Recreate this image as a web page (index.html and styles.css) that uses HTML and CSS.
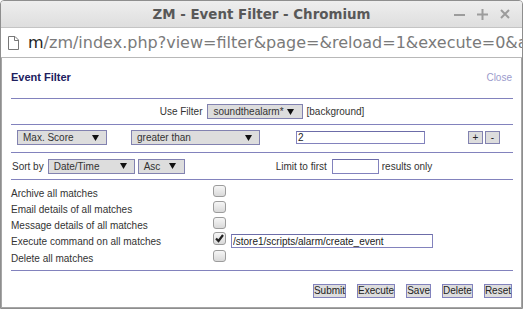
FILE: index.html
```html
<!DOCTYPE html>
<html>
<head>
  <title>ZM - Event Filter</title>
  <link rel="stylesheet" href="styles.css">
</head>

<body>
  <div class="window">
    <div class="titlebar">
      <span class="title">ZM - Event Filter - Chromium</span>
      <div class="controls">
        <svg width="11" height="11" viewBox="0 0 11 11"><path d="M0 6h11" stroke="#9c9c9c" stroke-width="2"/></svg>
        <svg width="11" height="11" viewBox="0 0 11 11"><path d="M0 5.5h11M5.5 0v11" stroke="#9c9c9c" stroke-width="2"/></svg>
        <svg width="10" height="10" viewBox="0 0 10 10"><path d="M1 1l8 8M9 1l-8 8" stroke="#9c9c9c" stroke-width="2"/></svg>
      </div>
    </div>

    <div class="urlbar">
      <svg class="page-icon" width="11" height="14" viewBox="0 0 11 14">
        <path d="M0.5 0.5h6.5l3.5 3.5v9.5h-10z" fill="#fff" stroke="#777"/>
        <path d="M6.5 0.5v4h4" fill="none" stroke="#777"/>
      </svg>
      <span class="url"><span class="host">m</span>/zm/index.php?view=filter&amp;page=&amp;reload=1&amp;execute=0&amp;a</span>
    </div>

    <div class="page">
      <div class="page-head">
        <h2>Event Filter</h2>
        <a class="close" href="#">Close</a>
      </div>

      <div class="filter-row">
        <span>Use Filter</span>
        <div class="select filter-select">soundthealarm*<svg class="arrow" width="7" height="6" viewBox="0 0 7 6"><path d="M0 0h7l-3.5 6z"/></svg></div>
        <span>[background]</span>
      </div>

      <div class="terms-row">
        <div class="select attr-select">Max. Score<svg class="arrow" width="7" height="6" viewBox="0 0 7 6"><path d="M0 0h7l-3.5 6z"/></svg></div>
        <div class="select op-select">greater than<svg class="arrow" width="7" height="6" viewBox="0 0 7 6"><path d="M0 0h7l-3.5 6z"/></svg></div>
        <input class="text-input value-input" type="text" value="2">
        <div class="term-buttons">
          <button class="small-btn">+</button>
          <button class="small-btn">-</button>
        </div>
      </div>

      <div class="sort-row">
        <div class="sort-group">
          <span>Sort by</span>
          <div class="select sort-select">Date/Time<svg class="arrow" width="7" height="6" viewBox="0 0 7 6"><path d="M0 0h7l-3.5 6z"/></svg></div>
          <div class="select dir-select">Asc<svg class="arrow" width="7" height="6" viewBox="0 0 7 6"><path d="M0 0h7l-3.5 6z"/></svg></div>
        </div>
        <div class="limit-group">
          <span>Limit to first</span>
          <input class="text-input limit-input" type="text">
          <span>results only</span>
        </div>
      </div>

      <div class="actions">
        <div class="action">
          <span class="action-label">Archive all matches</span>
          <span class="check"></span>
        </div>
        <div class="action">
          <span class="action-label">Email details of all matches</span>
          <span class="check"></span>
        </div>
        <div class="action">
          <span class="action-label">Message details of all matches</span>
          <span class="check"></span>
        </div>
        <div class="action action-exec">
          <span class="action-label">Execute command on all matches</span>
          <span class="check checked"><svg width="11" height="11" viewBox="0 0 11 11"><path d="M2 5.5l2.5 2.5l4.5-6" fill="none" stroke="#222" stroke-width="2.2"/></svg></span>
          <input class="text-input exec-input" type="text" value="/store1/scripts/alarm/create_event">
        </div>
        <div class="action">
          <span class="action-label">Delete all matches</span>
          <span class="check"></span>
        </div>
      </div>

      <div class="buttons">
        <button class="btn">Submit</button>
        <button class="btn">Execute</button>
        <button class="btn">Save</button>
        <button class="btn">Delete</button>
        <button class="btn">Reset</button>
      </div>
    </div>
  </div>
</body>
</html>
```

FILE: styles.css
```css
* {
  box-sizing: border-box;
}

body {
  margin: 0;
  font-family: "Liberation Sans", Arial, sans-serif;
  font-size: 10px;
  color: #333;
  background: #fff;
}

.window {
  display: flex;
  flex-direction: column;
  width: 523px;
  height: 309px;
  border: 1px solid #8e8e8e;
  border-radius: 4px 4px 0 0;
  overflow: hidden;
}

.titlebar {
  display: grid;
  grid-template-columns: 1fr auto 1fr;
  align-items: center;
  height: 27px;
  background: linear-gradient(#eeeeee, #dedede);
  border-bottom: 1px solid #c4c4c4;
}

.title {
  grid-column: 2;
  font-family: "DejaVu Sans", sans-serif;
  font-size: 13.4px;
  font-weight: bold;
  color: #585858;
}

.controls {
  grid-column: 3;
  justify-self: end;
  display: flex;
  align-items: center;
  gap: 12px;
  padding-right: 12px;
}

.urlbar {
  display: flex;
  align-items: center;
  height: 30px;
  padding-left: 7px;
  background: #fff;
  border-bottom: 1px solid #b8b8b8;
  white-space: nowrap;
  overflow: hidden;
}

.page-icon {
  flex-shrink: 0;
}

.url {
  margin-left: 9px;
  font-family: "DejaVu Sans", sans-serif;
  font-size: 16px;
  color: #7a7a7a;
}

.url .host {
  color: #1e1e1e;
}

.page {
  flex: 1;
  padding: 0 8px 0 9px;
  border-left: 1px solid #a6a6a6;
  border-right: 1px solid #a6a6a6;
  border-bottom: 1px solid #a6a6a6;
}

.page-head {
  display: flex;
  justify-content: space-between;
  align-items: center;
  height: 41px;
  padding-bottom: 2px;
  border-bottom: 1px solid #8282bd;
}

.page-head h2 {
  margin: 0;
  font-size: 11px;
  font-weight: bold;
  color: #20205e;
}

.close {
  margin-right: 1px;
  color: #9b9bcc;
  text-decoration: none;
}

.select {
  display: flex;
  justify-content: space-between;
  align-items: center;
  height: 15px;
  padding: 0 7px 0 5px;
  background: #dddddd;
  border: 1px solid #8282b0;
  white-space: nowrap;
}

.arrow {
  flex-shrink: 0;
  fill: #111;
}

.text-input {
  height: 14px;
  padding: 0 1px;
  font-family: inherit;
  font-size: 10px;
  color: #222;
  background: #fff;
  border: 1px solid #8282bd;
  border-top-color: #6c6ca8;
  outline: none;
}

.filter-row {
  display: flex;
  justify-content: center;
  align-items: center;
  height: 26px;
  border-bottom: 1px solid #8282bd;
}

.filter-select {
  width: 96px;
  margin: 0 3px 0 5px;
  padding-right: 8px;
}

.terms-row {
  display: flex;
  align-items: flex-start;
  height: 28px;
  padding-top: 5px;
  border-bottom: 1px solid #8282bd;
}

.attr-select {
  width: 90px;
  margin-left: 6px;
}

.op-select {
  width: 129px;
  margin-left: 24px;
}

.value-input {
  width: 129px;
  margin: 1px 0 0 36px;
  height: 13px;
}

.term-buttons {
  display: flex;
  gap: 2px;
  margin: 1px 13px 0 auto;
}

.small-btn {
  width: 15px;
  height: 13px;
  padding: 0;
  font-family: inherit;
  font-size: 10px;
  line-height: 11px;
  color: #222;
  background: #dddddd;
  border: 1px solid #8282b0;
}

.sort-row {
  display: grid;
  grid-template-columns: 184px 1fr;
  align-items: center;
  height: 27px;
  border-bottom: 1px solid #8282bd;
}

.sort-group {
  display: flex;
  align-items: center;
  padding-left: 1px;
}

.sort-select {
  width: 87px;
  margin-left: 4px;
}

.dir-select {
  width: 47px;
  margin-left: 3px;
  padding-right: 8px;
}

.limit-group {
  display: flex;
  justify-content: center;
  align-items: center;
}

.limit-input {
  width: 47px;
  height: 15px;
  margin: 0 3px 0 5px;
}

.actions {
  padding: 4px 0 5px;
  border-bottom: 1px solid #8282bd;
}

.action {
  display: flex;
  align-items: flex-start;
  height: 16px;
}

.action-exec {
  height: 17px;
}

.action-label {
  width: 202px;
  padding-top: 4px;
  line-height: 12px;
}

.check {
  display: block;
  width: 13px;
  height: 12px;
  margin-top: 1px;
  background: linear-gradient(#f6f6f6, #d9d9d9);
  border: 1px solid #9c9c9c;
  border-radius: 3px;
}

.check svg {
  display: block;
}

.action-exec .check {
  height: 13px;
  margin-top: 0;
}

.exec-input {
  width: 202px;
  margin: 2px 0 0 5px;
}

.buttons {
  display: flex;
  justify-content: flex-end;
  gap: 11px;
  padding: 13px 1px 0 0;
}

.btn {
  height: 14px;
  padding: 0;
  font-family: inherit;
  font-size: 10px;
  line-height: 12px;
  color: #222;
  background: #dddddd;
  border: 1px solid #8282bd;
}
```
